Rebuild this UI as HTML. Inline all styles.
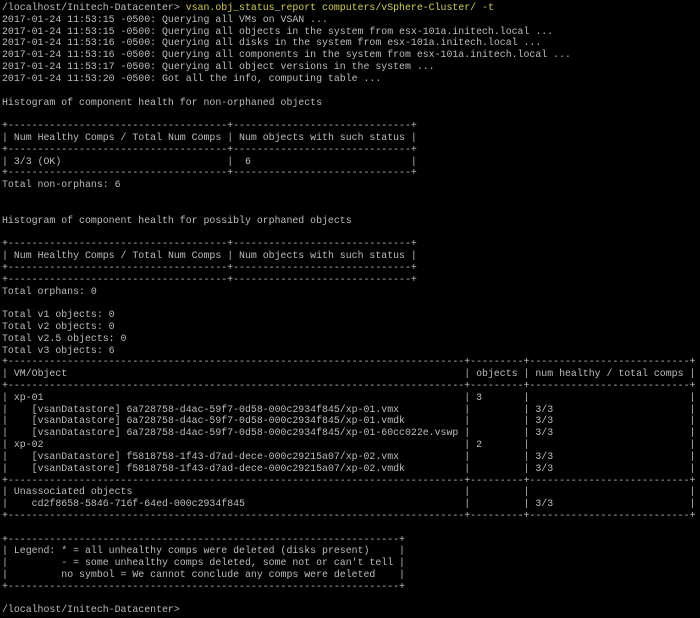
<!DOCTYPE html>
<html><head><meta charset="utf-8"><style>
html,body{margin:0;padding:0;background:#000;width:700px;height:618px;overflow:hidden}
pre{margin:0;position:absolute;left:2px;top:2px;font-family:"Liberation Mono",monospace;font-size:9.88px;line-height:11.82px;color:#bdbdbd;white-space:pre}
i{font-style:normal;display:inline-block;white-space:pre;overflow:hidden;vertical-align:top;height:11.82px}
.y{color:#cfcf5a}
.a{width:77ch}.b{width:9ch}.c{width:27ch}
.h1{width:37ch}.h2{width:30ch}.l{width:66ch}
</style></head><body><pre>/localhost/Initech-Datacenter&gt; <span class="y">vsan.obj_status_report computers/vSphere-Cluster/ -t</span>
2017-01-24 11:53:15 -0500: Querying all VMs on VSAN ...
2017-01-24 11:53:15 -0500: Querying all objects in the system from esx-101a.initech.local ...
2017-01-24 11:53:16 -0500: Querying all disks in the system from esx-101a.initech.local ...
2017-01-24 11:53:16 -0500: Querying all components in the system from esx-101a.initech.local ...
2017-01-24 11:53:17 -0500: Querying all object versions in the system ...
2017-01-24 11:53:20 -0500: Got all the info, computing table ...

Histogram of component health for non-orphaned objects

+<i class="h1">----------------------------------------------------------------------------------------------</i>+<i class="h2">----------------------------------------------------------------------------</i>+
|<i class="h1"> Num Healthy Comps / Total Num Comps </i>|<i class="h2"> Num objects with such status </i>|
+<i class="h1">----------------------------------------------------------------------------------------------</i>+<i class="h2">----------------------------------------------------------------------------</i>+
|<i class="h1"> 3/3 (OK)</i>|<i class="h2">  6</i>|
+<i class="h1">----------------------------------------------------------------------------------------------</i>+<i class="h2">----------------------------------------------------------------------------</i>+
Total non-orphans: 6


Histogram of component health for possibly orphaned objects

+<i class="h1">----------------------------------------------------------------------------------------------</i>+<i class="h2">----------------------------------------------------------------------------</i>+
|<i class="h1"> Num Healthy Comps / Total Num Comps </i>|<i class="h2"> Num objects with such status </i>|
+<i class="h1">----------------------------------------------------------------------------------------------</i>+<i class="h2">----------------------------------------------------------------------------</i>+
+<i class="h1">----------------------------------------------------------------------------------------------</i>+<i class="h2">----------------------------------------------------------------------------</i>+
Total orphans: 0

Total v1 objects: 0
Total v2 objects: 0
Total v2.5 objects: 0
Total v3 objects: 6
+<i class="a">----------------------------------------------------------------------------------------------------------------------</i>+<i class="b">------------------------------</i>+<i class="c">----------------------------------------------------</i>+
|<i class="a"> VM/Object</i>|<i class="b"> objects </i>|<i class="c"> num healthy / total comps </i>|
+<i class="a">----------------------------------------------------------------------------------------------------------------------</i>+<i class="b">------------------------------</i>+<i class="c">----------------------------------------------------</i>+
|<i class="a"> xp-01</i>|<i class="b"> 3</i>|<i class="c"> </i>|
|<i class="a">    [vsanDatastore] 6a728758-d4ac-59f7-0d58-000c2934f845/xp-01.vmx</i>|<i class="b"> </i>|<i class="c"> 3/3</i>|
|<i class="a">    [vsanDatastore] 6a728758-d4ac-59f7-0d58-000c2934f845/xp-01.vmdk</i>|<i class="b"> </i>|<i class="c"> 3/3</i>|
|<i class="a">    [vsanDatastore] 6a728758-d4ac-59f7-0d58-000c2934f845/xp-01-60cc022e.vswp</i>|<i class="b"> </i>|<i class="c"> 3/3</i>|
|<i class="a"> xp-02</i>|<i class="b"> 2</i>|<i class="c"> </i>|
|<i class="a">    [vsanDatastore] f5818758-1f43-d7ad-dece-000c29215a07/xp-02.vmx</i>|<i class="b"> </i>|<i class="c"> 3/3</i>|
|<i class="a">    [vsanDatastore] f5818758-1f43-d7ad-dece-000c29215a07/xp-02.vmdk</i>|<i class="b"> </i>|<i class="c"> 3/3</i>|
+<i class="a">----------------------------------------------------------------------------------------------------------------------</i>+<i class="b">------------------------------</i>+<i class="c">----------------------------------------------------</i>+
|<i class="a"> Unassociated objects</i>|<i class="b"> </i>|<i class="c"> </i>|
|<i class="a">    cd2f8658-5846-716f-64ed-000c2934f845</i>|<i class="b"> </i>|<i class="c"> 3/3</i>|
+<i class="a">----------------------------------------------------------------------------------------------------------------------</i>+<i class="b">------------------------------</i>+<i class="c">----------------------------------------------------</i>+

+<i class="l">----------------------------------------------------------------------------------------------------</i>+
|<i class="l"> Legend: * = all unhealthy comps were deleted (disks present)</i>|
|<i class="l">         - = some unhealthy comps deleted, some not or can't tell</i>|
|<i class="l">         no symbol = We cannot conclude any comps were deleted</i>|
+<i class="l">----------------------------------------------------------------------------------------------------</i>+

/localhost/Initech-Datacenter&gt;</pre></body></html>
